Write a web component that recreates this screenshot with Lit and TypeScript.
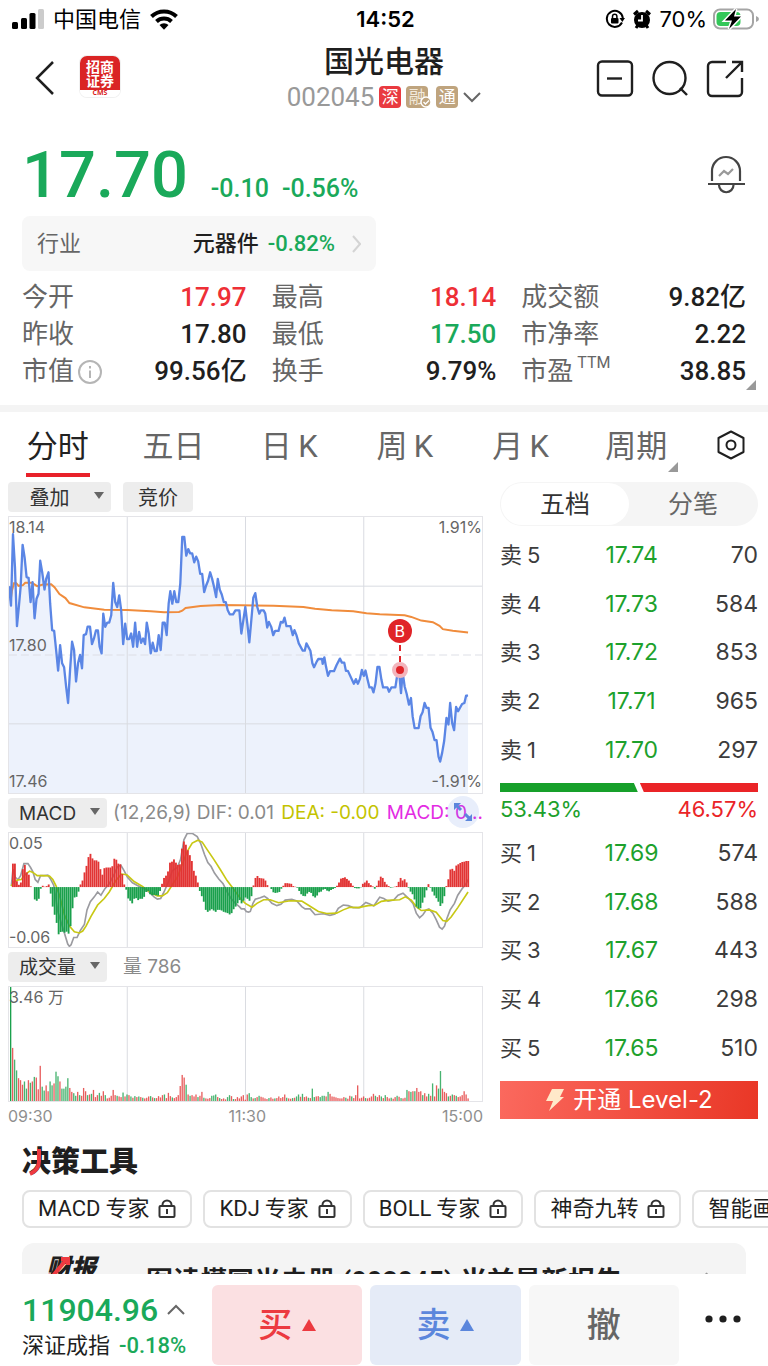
import { LitElement, html, svg, css } from "lit";
import { customElement, property, state } from "lit/decorators.js";
import { classMap } from "lit/directives/class-map.js";

type Point = [number, number];

const parse = (text: string, dx = 0): Point[] =>
  text
    .trim()
    .split(/\s+/)
    .map((pair) => {
      const [x, y] = pair.split(",").map(Number);
      return [x + dx, y] as Point;
    });

const toPath = (points: Point[]) => "M" + points.map(([x, y]) => `${x} ${y}`).join("L");

// The second half of every series is stored relative to the session midpoint.
const MID = 720;

const PRICE: Point[] = [
  ...parse(`23,497 29,556 35,340 41,440 47,618 53,556 58,500 64,372 70,410 76,470 82,472 88,545 94,485 100,594 106,535
  112,520 117,420 123,455 130,507 135,475 142,455 147,550 153,630 159,632 165,690 171,752 177,675 183,730 189,742
  195,800 201,850 207,750 213,665 219,690 225,785 231,730 237,705 243,745 248,645 255,642 260,619 267,619 273,672
  279,655 285,631 291,631 296,680 302,700 307,580 313,620 319,607 325,607 331,585 337,487 343,545 349,560 355,525
  361,570 367,672 373,610 379,657 385,657 391,640 397,680 403,607 409,680 415,635 421,668 427,655 433,672 438,607
  444,640 450,700 456,668 462,693 468,693 474,645 480,690 486,607 492,607 498,645 504,550 509,512 515,550 521,512
  527,545 533,545 539,490 545,348 551,348 557,405 563,385 569,398 575,398 581,425 587,408 593,422 599,460 605,460
  611,515 617,495 623,480 629,455 635,475 641,500 647,530 652,475 658,508 664,522 670,545 676,545 682,570 688,582
  698,582 705,570 717,570`),
  ...parse(
    `3,640 9,600 15,560 21,610 27,667 33,600 39,532 45,518 51,560 57,580 62,570 70,570 75,580 81,622 86,605 93,620
  99,645 105,632 115,632 122,605 128,607 133,592 139,618 151,618 158,645 163,630 169,645 176,670 188,692 194,692
  199,670 211,692 217,730 222,742 230,725 235,717 246,717 248,732 253,712 258,740 264,768 270,754 282,754 290,735
  300,716 306,728 313,728 318,753 324,753 342,792 348,778 354,792 360,778 366,750 372,768 377,752 383,778 389,803
  396,803 401,818 407,792 413,741 419,741 425,780 430,803 443,803 448,816 455,803 467,803 472,770 478,750 484,820
  489,758 495,800 501,822 508,855 514,835 519,890 525,926 537,926 543,890 549,878 555,850 561,865 567,865 573,925
  579,938 585,962 591,962 597,1012 602,1027 608,1000 614,965 621,895 627,915 632,850 638,910 644,932 650,862
  656,875 668,853 675,850 680,828 686,828`,
    MID
  ),
];

const AVERAGE: Point[] = [
  ...parse(`28,540 32,510 38,488 45,488 52,496 65,494 72,487 92,487 108,497 125,492 150,491 160,500 175,521 193,533
  205,548 250,561 310,568 380,569 450,573 490,576 535,575 545,571 555,563 600,557 660,554 720,555`),
  ...parse(
    `100,556 190,560 225,565 275,570 340,573 380,579 420,582 495,585 515,590 545,601 580,606 600,617 610,627
  640,632 686,637`,
    MID
  ),
];

const DIF: Point[] = [
  ...parse(`30,272 35,220 42,245 50,252 58,240 68,203 80,203 88,215 95,228 102,252 110,260 118,240 128,240 140,238
  148,250 158,270 170,350 185,400 200,450 205,457 210,452 218,430 228,430 238,408 250,390 258,345 268,320 280,305
  290,290 300,300 312,280 325,265 340,235 350,212 360,208 370,225 380,245 395,262 410,270 430,280 445,290 460,305
  470,312 480,310 490,290 505,255 515,225 530,215 540,190 550,130 560,110 575,110 590,120 600,140 612,175 622,200
  632,212 642,232 655,250 668,265 680,290 692,310 705,325 717,335`),
  ...parse(
    `3,342 12,342 18,350 25,352 30,350 38,325 45,312 60,308 72,303 82,310 95,325 110,332 122,328 135,315 155,313
  170,318 185,335 195,342 210,342 225,360 250,357 270,362 285,358 295,340 310,330 325,332 340,338 360,338 378,322
  390,327 402,333 412,318 420,306 432,310 445,318 462,315 475,300 490,294 505,308 520,325 530,355 540,369 550,360
  560,345 568,342 580,355 590,375 600,398 608,404 615,395 622,372 632,345 645,325 655,300 668,280 680,265 686,252`,
    MID
  ),
];

const DEA: Point[] = [
  ...parse(`30,272 38,258 50,253 60,252 70,238 85,226 95,230 108,240 125,240 145,241 155,252 165,272 175,300 190,360
  205,395 220,412 235,416 245,410 255,395 270,365 290,330 310,310 325,290 345,255 362,235 378,237 400,258 425,273
  450,292 470,302 485,302 500,292 515,268 530,245 545,205 560,165 575,140 592,131 605,137 620,160 640,190 660,222
  680,255 700,282 720,310`),
  ...parse(
    `15,325 35,337 50,325 70,314 90,314 115,323 150,317 185,318 210,334 235,350 260,356 290,355 310,345 330,337
  355,338 385,332 405,331 425,319 445,316 480,314 497,305 515,315 530,335 545,347 570,345 590,352 610,378 622,380
  635,367 655,338 686,290`,
    MID
  ),
];

const HISTOGRAM = [
  72, 72, 18, 7, 14, 55, 68, 45, 38, 2, 0, -38, -42, -36, -5, 4, 1, 3, 8, -20, -60, -85, -110, -145, -138, -137, -140,
  -137, -143, -120, -65, -32, -30, -14, 8, 20, 45, 65, 92, 102, 88, 82, 82, 78, 55, 38, 58, 60, 60, 60, 64, 87, 84, 72,
  70, 40, 8, -8, -35, -42, -50, -36, -34, -40, -36, -36, -30, -15, -12, -22, -25, -24, -25, -26, -12, 10, 28, 35, 48,
  75, 78, 85, 75, 68, 70, 118, 140, 130, 113, 98, 80, 50, 35, 14, -12, -28, -45, -70, -76, -72, -68, -72, -76, -70,
  -70, -72, -76, -78, -80, -84, -80, -68, -60, -50, -40, -50, -42, -32, -36, -42, -28, 5, 28, 34, 28, 27, 26, 20, 6, 0,
  -6, -16, -18, -17, -15, -5, 4, 12, 12, 11, 10, 3, 1, -2, -12, -22, -27, -28, -20, -15, -18, -28, -32, -26, -16, -14,
  -8, -6, -11, -13, -9, -6, -3, 4, 14, 26, 28, 30, 25, 20, 12, 4, -3, -4, -4, -1, 10, 14, 20, 12, 6, 2, -5, 4, 20, 32,
  28, 16, 8, 3, -2, -1, 1, 3, 16, 28, 20, 24, 14, -2, -14, -22, -38, -60, -66, -65, -48, -32, -10, 9, -2, -14, -26,
  -34, -45, -58, -50, -28, 3, 24, 54, 56, 50, 66, 70, 74, 77, 78, 80, 80,
];

// Positive bars are up minutes, negative bars are down minutes.
const VOLUME = [
  -350, 163, -127, -94, 70, 64, 50, -60, -38, 64, -56, 60, -74, 72, 36, 108, -44, -32, 48, 30, -60, -48, 54, -90, -76,
  60, -38, -38, -44, -70, 40, 28, -24, -16, 28, -18, 16, 40, 30, -18, 20, -22, 34, 12, 18, -25, 16, 30, -18, 8, 10, 16,
  34, 18, -16, 14, 12, -26, 14, -20, 18, -14, 10, -15, 12, -14, 12, -10, 8, 10, 14, -15, 11, -9, 9, 15, 11, 18, -20, 9,
  25, 15, -11, 9, 12, 18, 46, 80, 72, -50, 20, -16, 18, 14, 20, -12, 16, 28, -10, 8, 7, 9, -16, -17, -20, 12, -9,
  6, 8, 5, -12, -18, 15, -6, 6, 12, 8, 14, 18, 4, 20, -24, -12, 8, -9, 12, -16, 13, 11, 8, 6, -9, 11, 7, -8, 9, 14, 9,
  12, 20, -10, 8, 7, -9, 10, -14, -20, 13, -22, 12, 14, -10, 9, -38, -12, 14, 15, -12, -16, -16, 14, -28, 22, 14, 13,
  11, 9, 8, 8, 12, -10, 7, 16, -14, 9, 18, 48, 8, 10, 14, -9, 8, 10, 14, 22, -16, 12, 18, -14, 9, -18, 12, 8, -10,
  7, 12, -16, 13, -9, 8, 10, -34, 30, -28, 30, -30, 40, 28, 30, -18, 24, 14, -22, 16, -54, 14, 48, -38, -92, 38, 28,
  24, -14, 16, -20, 18, -16, 12, 14, 18, 30, 20, 8,
];

const UP = "#e23434";
const DOWN = "#1aa04c";

const gridLines = (left: number, top: number, width: number, height: number) => svg`
  ${[0.25, 0.5, 0.75].map(
    (f) => svg`<line x1=${left + width * f} x2=${left + width * f} y1=${top} y2=${top + height}></line>`
  )}`;

@customElement("trend-chart")
export class TrendChart extends LitElement {
  static styles = css`
    :host {
      display: block;
      position: relative;
      height: 278px;
      box-sizing: border-box;
      border: 1px solid #e4e4e8;
      font: 16px/20px Inter, "Noto Sans CJK SC", sans-serif;
      color: #666;
    }
    svg {
      display: block;
      width: 100%;
      height: 100%;
    }
    .grid {
      stroke: #d9dbe1;
      stroke-width: 3;
    }
    .dash {
      stroke: #dddfe6;
      stroke-dasharray: 24 12;
    }
    .fill {
      fill: #edf2fc;
    }
    .price {
      fill: none;
      stroke: #5b86e5;
      stroke-width: 7;
      stroke-linejoin: round;
    }
    .avg {
      fill: none;
      stroke: #f08c3c;
      stroke-width: 6;
    }
    .axis {
      position: absolute;
      inset: 0;
      display: grid;
      grid-template-columns: 1fr auto;
      grid-template-rows: 1fr 1fr;
    }
    .axis span:nth-child(even) {
      text-align: right;
    }
    .axis span:nth-child(n + 3) {
      align-self: end;
      padding-bottom: 2px;
    }
    .mid {
      position: absolute;
      left: 0;
      bottom: 50%;
    }
    .marker {
      position: absolute;
      left: 82.6%;
      top: 102px;
      width: 24px;
      margin-left: -12px;
      display: flex;
      flex-direction: column;
      align-items: center;
    }
    .letter {
      width: 24px;
      height: 24px;
      border-radius: 50%;
      background: #e02428;
      color: #fff;
      font-size: 16px;
      line-height: 24px;
      text-align: center;
    }
    .stem {
      width: 2px;
      height: 20px;
      background: repeating-linear-gradient(#fff 0 2px, #e02428 2px 8px, transparent 8px 11px);
    }
    .dot {
      width: 8px;
      height: 8px;
      margin-top: -1px;
      border: 4px solid #f3b5bc;
      border-radius: 50%;
      background: #e02428;
    }
  `;

  render() {
    const last = PRICE[PRICE.length - 1][0];
    const line = toPath(PRICE);
    return html`
      <svg viewBox="23 288 1425 834" preserveAspectRatio="none" aria-hidden="true">
        <path class="fill" d="${line}L${last} 1122L23 1122Z"></path>
        <g class="grid">
          ${gridLines(23, 288, 1425, 834)}
          <line x1="23" x2="1448" y1="497" y2="497"></line>
          <line class="dash" x1="23" x2="1448" y1="705" y2="705"></line>
          <line x1="23" x2="1448" y1="913" y2="913"></line>
        </g>
        <path class="avg" d=${toPath(AVERAGE)}></path>
        <path class="price" d=${line}></path>
      </svg>
      <div class="axis"><span>18.14</span><span>1.91%</span><span>17.46</span><span>-1.91%</span></div>
      <span class="mid">17.80</span>
      <div class="marker"><span class="letter">B</span><span class="stem"></span><span class="dot"></span></div>
    `;
  }
}

@customElement("bar-chart")
export class BarChart extends LitElement {
  @property() kind: "macd" | "volume" = "macd";

  static styles = css`
    :host {
      display: block;
      position: relative;
      height: 116px;
      box-sizing: border-box;
      border: 1px solid #e4e4e8;
      font: 16px/20px Inter, "Noto Sans CJK SC", sans-serif;
      color: #666;
    }
    svg {
      display: block;
      width: 100%;
      height: 100%;
    }
    .grid {
      stroke: #d9dbe1;
      stroke-width: 3;
    }
    .dif,
    .dea {
      fill: none;
      stroke: #9b9ba0;
      stroke-width: 5;
    }
    .dea {
      stroke: #c8c814;
    }
    .axis {
      position: absolute;
      inset: 0;
      display: flex;
      flex-direction: column;
      justify-content: space-between;
    }
  `;

  private macd() {
    return svg`
      <path class="dif" d=${toPath(DIF)}></path>
      <path class="dea" d=${toPath(DEA)}></path>
      ${HISTOGRAM.map(
        (v, i) => svg`<rect x=${32 + i * 5.99} y=${v > 0 ? 275 - v : 275} width="5.6"
          height=${Math.abs(v)} fill=${v > 0 ? UP : DOWN}></rect>`
      )}`;
  }

  private volume() {
    return svg`${VOLUME.map(
      (v, i) => svg`<rect x=${26 + i * 5.94} y=${459 - Math.abs(v)} width="4"
        height=${Math.abs(v)} fill=${v > 0 ? UP : DOWN} opacity=${i ? 0.8 : 1}></rect>`
    )}`;
  }

  render() {
    const macd = this.kind === "macd";
    return html`
      <svg viewBox="23 109 1425 350" preserveAspectRatio="none" aria-hidden="true">
        <g class="grid">${gridLines(23, 109, 1425, 350)}</g>
        ${macd ? this.macd() : this.volume()}
      </svg>
      <div class="axis">
        ${macd ? html`<span>0.05</span><span>-0.06</span>` : html`<span>3.46 万</span>`}
      </div>
    `;
  }
}

const ASKS = [
  ["卖", "5", "17.74", "70"],
  ["卖", "4", "17.73", "584"],
  ["卖", "3", "17.72", "853"],
  ["卖", "2", "17.71", "965"],
  ["卖", "1", "17.70", "297"],
];
const BIDS = [
  ["买", "1", "17.69", "574"],
  ["买", "2", "17.68", "588"],
  ["买", "3", "17.67", "443"],
  ["买", "4", "17.66", "298"],
  ["买", "5", "17.65", "510"],
];

@customElement("order-book")
export class OrderBook extends LitElement {
  @state() private view = "五档";

  static styles = css`
    :host {
      display: block;
      font: 23px/28px Inter, "Noto Sans CJK SC", sans-serif;
      color: #3c3c3c;
    }
    button {
      font: inherit;
      color: inherit;
      border: 0;
      padding: 0;
      background: none;
      cursor: pointer;
    }
    .segment {
      display: grid;
      grid-template-columns: 1fr 1fr;
      height: 44px;
      box-sizing: border-box;
      padding: 1px;
      border-radius: 22px;
      background: #f5f5f5;
      margin-bottom: 5px;
    }
    .segment button {
      border-radius: 21px;
      font-size: 25px;
      color: #666;
    }
    .segment .on {
      background: #fff;
      color: #333;
    }
    table {
      width: 100%;
      height: 243px;
      border-collapse: collapse;
      table-layout: fixed;
    }
    th,
    td {
      padding: 0;
      font-weight: 400;
      text-align: right;
    }
    th {
      width: 30%;
    }
    .level {
      display: flex;
      gap: 5px;
      font-size: 22px;
    }
    td:last-child {
      width: 28%;
    }
    .price {
      text-align: center;
      color: #1da12c;
    }
    .ratio {
      display: flex;
      height: 9px;
      margin-top: 9px;
    }
    .buy {
      background: #17a02a;
      clip-path: polygon(0 0, calc(100% - 4px) 0, 100% 100%, 0 100%);
    }
    .sell {
      flex: 1;
      margin-left: 2px;
      background: #ea2427;
      clip-path: polygon(0 0, 100% 0, 100% 100%, 4px 100%);
    }
    .shares {
      display: flex;
      justify-content: space-between;
      font-size: 22px;
      line-height: 34px;
      margin-bottom: 3px;
      color: #1da12c;
    }
    .shares .red {
      color: #ea2427;
    }
    .level2 {
      display: flex;
      align-items: center;
      justify-content: center;
      gap: 8px;
      width: 100%;
      height: 38px;
      margin-top: 9px;
      color: #fff;
      font-size: 24px;
      background: linear-gradient(100deg, #fb695e, #e93726);
    }
  `;

  private rows(rows: string[][]) {
    return html`<table>
      <tbody>
        ${rows.map(
          ([side, level, price, size]) => html`<tr>
            <th scope="row"><div class="level"><span>${side}</span><span>${level}</span></div></th>
            <td class="price">${price}</td>
            <td>${size}</td>
          </tr>`
        )}
      </tbody>
    </table>`;
  }

  render() {
    return html`
      <div class="segment">
        ${["五档", "分笔"].map(
          (v) => html`<button class=${classMap({ on: this.view === v })} @click=${() => (this.view = v)}>${v}</button>`
        )}
      </div>
      ${this.rows(ASKS)}
      <div class="ratio"><span class="buy" style="width:53.43%"></span><span class="sell"></span></div>
      <div class="shares"><span>53.43%</span><span class="red">46.57%</span></div>
      ${this.rows(BIDS)}
      <button class="level2">
        <svg width="20" height="24" viewBox="0 0 20 24" aria-hidden="true">
          <path d="M7 1h12l-4 8h4L4 23l4-10H1z" fill="#ffe9c9"></path>
        </svg>
        <span>开通 Level-2</span>
      </button>
    `;
  }
}

const lock = svg`<svg class="lock" width="18" height="20" viewBox="0 0 18 20" fill="none" stroke="#333"
  stroke-width="2" aria-hidden="true"><rect x="1.5" y="7" width="15" height="11" rx="1"></rect>
  <path d="M4.5 7V6a4.500 4.500 0 0 1 9 0v1M9 10v5"></path></svg>`;

const CELLS = [
  { label: "今开", value: "17.97", tone: "up" },
  { label: "最高", value: "18.14", tone: "up" },
  { label: "成交额", value: "9.82亿" },
  { label: "昨收", value: "17.80" },
  { label: "最低", value: "17.50", tone: "down" },
  { label: "市净率", value: "2.22" },
  { label: "市值", value: "99.56亿", info: true },
  { label: "换手", value: "9.79%" },
  { label: "市盈", value: "38.85", sup: "TTM", more: true },
];

const TABS = ["分时", "五日", "日\u2009K", "周\u2009K", "月\u2009K", "周期"];
const CHIPS = [["MACD", "专家"], ["KDJ", "专家"], ["BOLL", "专家"], ["神奇九转"], ["智能画线"]];

@customElement("app-root")
export class AppRoot extends LitElement {
  @state() private tab = "分时";

  static styles = css`
    :host {
      display: flex;
      flex-direction: column;
      height: 100vh;
      background: #fff;
      color: #1f1f1f;
      font-family: Roboto, "Noto Sans CJK SC", sans-serif;
      font-size: 22px;
      line-height: 28px;
    }
    button,
    select {
      font: inherit;
      color: inherit;
      border: 0;
      padding: 0;
      margin: 0;
      background: none;
      cursor: pointer;
    }
    h1,
    h2,
    dl,
    dt,
    dd {
      margin: 0;
      font-weight: inherit;
    }
    svg {
      flex: none;
    }
    .up {
      color: #ee2f36;
    }
    .down {
      color: #1aa95a;
    }
    .status {
      display: grid;
      grid-template-columns: 1fr auto 1fr;
      align-items: center;
      height: 38px;
      padding: 0 9px 0 12px;
      font-family: Inter, "Noto Sans CJK SC", sans-serif;
      color: #000;
      flex: none;
    }
    .status div {
      display: flex;
      align-items: center;
      gap: 9px;
    }
    .status .right {
      justify-content: flex-end;
      gap: 6px;
    }
    .clock {
      font-weight: 600;
    }
    main {
      flex: 1;
      min-height: 0;
      overflow: hidden auto;
      scrollbar-width: none;
    }
    .header {
      display: grid;
      grid-template-columns: 1fr auto 1fr;
      align-items: center;
      height: 82px;
      padding: 0 24px;
    }
    .header nav,
    .tools {
      display: flex;
      align-items: center;
      gap: 25px;
    }
    .header nav {
      align-self: start;
      padding: 18px 0 0 10px;
    }
    .header button {
      display: flex;
    }
    .tools {
      justify-content: flex-end;
      gap: 17px;
    }
    .logo {
      display: grid;
      grid-template-rows: 14px 14px 10px;
      width: 40px;
      height: 41px;
      box-sizing: border-box;
      padding-top: 3px;
      border-radius: 7px;
      box-shadow: 0 0 0 1px #f0f0f0;
      overflow: hidden;
      text-align: center;
      font: bold 14px/14px "Noto Sans CJK SC", sans-serif;
      color: #fff;
      background: linear-gradient(#da2424 82%, #fff 82%);
    }
    .logo small {
      font: bold 7px/12px "Open Sans", sans-serif;
      color: #da2424;
    }
    .name {
      text-align: center;
    }
    .name h1 {
      font-size: 30px;
      line-height: 36px;
      font-weight: 500;
    }
    .code {
      display: flex;
      align-items: center;
      justify-content: center;
      gap: 5px;
      font-size: 26px;
      line-height: 34px;
      color: #999;
    }
    .badge {
      position: relative;
      width: 22px;
      height: 22px;
      border-radius: 4px;
      background: #e93a40;
      color: #fff;
      font-size: 17px;
      line-height: 22px;
    }
    .gold {
      background: #bfa47e;
    }
    .soft {
      color: #f3eadc;
      margin-right: 3px;
    }
    .badge svg {
      position: absolute;
      right: -4px;
      bottom: 0;
    }
    .quote {
      padding: 15px 22px 0;
    }
    .headline {
      display: flex;
      align-items: baseline;
      gap: 13px;
      font-size: 25px;
      font-weight: 500;
    }
    .last {
      font-size: 65px;
      line-height: 80px;
      margin-right: 10px;
    }
    .bell {
      margin-left: auto;
      align-self: center;
      display: flex;
    }
    .industry {
      display: flex;
      align-items: center;
      width: 354px;
      box-sizing: border-box;
      height: 55px;
      padding: 0 15px;
      border-radius: 8px;
      background: #f7f7f7;
      text-decoration: none;
      color: #666;
      margin: 1px 0 8px;
    }
    .industry b {
      margin-left: auto;
      margin-right: 9px;
      font-weight: 500;
      color: #1f1f1f;
    }
    .industry .down {
      font-weight: 500;
      margin-right: 17px;
    }
    .cells {
      display: grid;
      grid-template-columns: repeat(3, 1fr);
      column-gap: 25px;
      font-size: 26px;
      line-height: 37px;
    }
    .cell {
      position: relative;
      display: flex;
      justify-content: space-between;
    }
    .cell dt {
      display: flex;
      align-items: center;
      gap: 4px;
      color: #666;
    }
    .cell dd {
      font-weight: 500;
    }
    .cell sup {
      align-self: flex-start;
      font-size: 16px;
      line-height: 20px;
    }
    .corner {
      position: absolute;
      right: -10px;
      bottom: 0;
    }
    .rule {
      height: 7px;
      margin-top: 15px;
      background: #f4f4f4;
    }
    .tabs {
      display: grid;
      grid-template-columns: repeat(6, 116fr) 74fr;
      height: 66px;
    }
    .tabs button {
      position: relative;
      padding-top: 4px;
      font-size: 31px;
      color: #666;
    }
    .tabs .on {
      color: #222;
    }
    .tabs .on::after {
      content: "";
      position: absolute;
      left: 50%;
      bottom: 1px;
      width: 64px;
      height: 4px;
      margin-left: -32px;
      background: #e8212a;
    }
    .tabs .corner {
      right: 16px;
      bottom: 6px;
    }
    .tabs .gear {
      display: flex;
      align-items: center;
      justify-content: center;
      padding: 0;
    }
    .market {
      display: grid;
      grid-template-columns: 475fr 258fr;
      gap: 17px;
      padding: 4px 10px 0 8px;
    }
    .charts {
      display: flex;
      flex-direction: column;
      gap: 4px;
      min-width: 0;
    }
    .bar {
      position: relative;
      display: flex;
      align-items: center;
      gap: 6px;
      height: 30px;
      font: 19px/30px Inter, "Noto Sans CJK SC", sans-serif;
      color: #8a8a8a;
      white-space: nowrap;
    }
    .first {
      gap: 12px;
      font-size: 20px;
    }
    .volume {
      gap: 16px;
    }
    .pill {
      position: relative;
      display: flex;
      flex: none;
      border-radius: 4px;
      background: #ededed;
      color: #333;
    }
    .pill select {
      appearance: none;
      width: 99px;
      height: 30px;
      padding: 1px 20px 0 0;
      text-align: center;
      text-align-last: center;
    }
    .first .pill select {
      width: 103px;
    }
    .pill svg {
      position: absolute;
      right: 7px;
      top: 10px;
      pointer-events: none;
    }
    .plain {
      height: 30px;
      padding: 1px 15px 0;
      border-radius: 4px;
      background: #ededed;
      color: #333;
    }
    .values {
      overflow: hidden;
      text-overflow: ellipsis;
      color: #e32be3;
    }
    .values span {
      color: #8a8a8a;
      margin-right: 2px;
    }
    .values .dea {
      color: #c3c300;
    }
    .expand {
      position: absolute;
      right: 4px;
      top: -2px;
      display: flex;
      width: 32px;
      height: 32px;
      align-items: center;
      justify-content: center;
      border-radius: 50%;
      background: rgb(91 134 229 / 14%);
    }
    .times {
      display: flex;
      justify-content: space-between;
      margin-top: -4px;
      font: 16px/28px Inter, sans-serif;
      color: #8f8f8f;
    }
    .decision {
      padding: 12px 0 0 22px;
    }
    .decision h2 {
      position: relative;
      font-size: 29px;
      line-height: 40px;
      font-weight: 900;
    }
    .decision h2 svg {
      position: absolute;
      left: 0;
      top: 5px;
    }
    .chips {
      display: flex;
      gap: 11px;
      margin: 8px 0 15px;
      overflow: hidden;
    }
    .chips button {
      flex: none;
      display: flex;
      align-items: center;
      gap: 5px;
      height: 38px;
      padding: 0 14px;
      border: 2px solid #e2e2e2;
      border-radius: 8px;
    }
    .chips .lock {
      margin-left: 4px;
    }
    .report {
      display: flex;
      align-items: center;
      padding: 13px 32px 13px 24px;
      margin-right: 22px;
      border-radius: 12px;
      background: #f4f4f4;
      color: inherit;
      text-decoration: none;
      font-size: 27px;
      line-height: 52px;
      font-weight: 700;
    }
    .report i {
      position: relative;
      align-self: flex-start;
      width: 100px;
      font-size: 25px;
      line-height: 26px;
      font-weight: 900;
    }
    .report i svg {
      position: absolute;
      left: 0;
      top: 0;
    }
    .report .go {
      margin-left: auto;
    }
    footer {
      display: grid;
      grid-template-columns: 182px 1fr 1fr 1fr 81px;
      gap: 8px;
      flex: none;
      padding: 11px 0 1px 22px;
      background: #fff;
    }
    .index {
      display: flex;
      flex-direction: column;
      text-align: left;
    }
    .index strong {
      display: flex;
      align-items: center;
      gap: 9px;
      font-size: 32px;
      line-height: 50px;
      font-weight: 500;
    }
    .index span {
      display: flex;
      gap: 9px;
      line-height: 22px;
    }
    .index em {
      font-style: normal;
      font-weight: 500;
    }
    .trade {
      display: flex;
      align-items: center;
      justify-content: center;
      gap: 10px;
      height: 80px;
      border-radius: 6px;
      font-size: 34px;
      font-weight: 500;
    }
    .buy {
      background: #fbe0e2;
      color: #ec3a40;
    }
    .sell {
      background: #e5ebf7;
      color: #5b86dc;
    }
    .cancel {
      background: #f7f7f7;
      color: #666;
    }
    .dots {
      display: flex;
      justify-content: center;
      padding-top: 30px;
      padding-right: 8px;
    }
  `;

  private pill(label: string, options: string[]) {
    return html`<label class="pill">
      <select aria-label=${label}>
        ${options.map((o) => html`<option>${o}</option>`)}
      </select>
      <svg width="10" height="8" viewBox="0 0 10 8" aria-hidden="true"><path d="M0 0h10L5 7z" fill="#666"></path></svg>
    </label>`;
  }

  private corner() {
    return svg`<svg class="corner" width="10" height="10" viewBox="0 0 10 10" aria-hidden="true">
      <path d="M10 0v10H0z" fill="#999"></path></svg>`;
  }

  private statusBar() {
    return html`<div class="status">
      <div>
        <svg width="32" height="20" viewBox="0 0 32 20" aria-hidden="true">
          <rect x="0" y="13" width="6" height="7" rx="1.500"></rect>
          <rect x="9" y="9" width="6" height="11" rx="1.500"></rect>
          <rect x="17.500" y="4" width="6" height="16" rx="1.500"></rect>
          <rect x="26" y="0" width="6" height="20" rx="1.500" fill="#ccc"></rect>
        </svg>
        <span>中国电信</span>
        <svg width="28" height="21" viewBox="0 0 28 21" fill="none" stroke="#000" stroke-width="4" aria-hidden="true">
          <path d="M1.500 7.500a18 18 0 0 1 25 0M6.500 12.500a11 11 0 0 1 15 0"></path>
          <path d="M9.500 16a6.500 6.500 0 0 1 9 0L14 20.800z" fill="#000" stroke="none"></path>
        </svg>
      </div>
      <span class="clock">14:52</span>
      <div class="right">
        <svg width="20" height="20" viewBox="0 0 20 20" aria-hidden="true">
          <path d="M17 13.500A8 8 0 1 1 17.800 9" fill="none" stroke="#000" stroke-width="2"></path>
          <path d="M14.500 9H20l-2.700 4z"></path>
          <rect x="6" y="9" width="7.500" height="5.500" rx="1"></rect>
          <path d="M7.500 9V7.500a2.200 2.200 0 0 1 4.400 0V9" fill="none" stroke="#000" stroke-width="1.500"></path>
        </svg>
        <svg width="22" height="20" viewBox="0 0 22 20" aria-hidden="true">
          <circle cx="11" cy="11" r="8"></circle>
          <path d="M3 5.500 7 2M19 5.500 15 2M5 19l2-3M17 19l-2-3" stroke="#000" stroke-width="3"></path>
          <path d="M11 6v5.500H7" fill="none" stroke="#fff" stroke-width="1.800"></path>
        </svg>
        <span>70%</span>
        <svg width="46" height="22" viewBox="0 0 46 22" aria-hidden="true">
          <rect x="1" y="1.500" width="39" height="19" rx="6" fill="none" stroke="#a5a5a5" stroke-width="2"></rect>
          <path d="M43 8v6q3-1 3-3t-3-3" fill="#a5a5a5"></path>
          <rect x="3.500" y="4" width="24" height="14" rx="4" fill="#34c759"></rect>
          <path d="M23 1 12 12.500h7L16 21l12-12.500h-7z" stroke="#fff" stroke-width="3" paint-order="stroke"></path>
        </svg>
      </div>
    </div>`;
  }

  private header() {
    return html`<header class="header">
      <nav>
        <button aria-label="返回">
          <svg width="21" height="36" viewBox="0 0 21 36" fill="none" stroke="#1f1f1f" stroke-width="2.500">
            <path d="M19 3 3 19l16 16"></path>
          </svg>
        </button>
        <div class="logo"><span>招商</span><span>证券</span><small>CMS</small></div>
      </nav>
      <div class="name">
        <h1>国光电器</h1>
        <div class="code">
          002045<span class="badge">深</span
          ><span class="badge gold soft"
            >融<svg width="12" height="12" viewBox="0 0 12 12" fill="#bfa47e" stroke="#fff" stroke-width="1.400">
              <circle cx="6" cy="6" r="5"></circle>
              <path d="m3.500 6 2 2 3.500-3.500" fill="none"></path></svg></span
          ><span class="badge gold">通</span>
          <svg width="18" height="12" viewBox="0 0 18 12" fill="none" stroke="#666" stroke-width="2">
            <path d="m1 2 8 8 8-8"></path>
          </svg>
        </div>
      </div>
      <div class="tools">
        <button aria-label="移除自选">
          <svg width="38" height="38" viewBox="0 0 38 38" fill="none" stroke="#1f1f1f" stroke-width="2.400">
            <rect x="2" y="1.500" width="34" height="34" rx="4"></rect>
            <path d="M11 18.500h15"></path>
          </svg>
        </button>
        <button aria-label="搜索">
          <svg width="38" height="38" viewBox="0 0 38 38" fill="none" stroke="#1f1f1f" stroke-width="2.400">
            <circle cx="18.500" cy="18" r="16"></circle>
            <path d="m29 28 7 7"></path>
          </svg>
        </button>
        <button aria-label="分享">
          <svg width="38" height="38" viewBox="0 0 38 38" fill="none" stroke="#1f1f1f" stroke-width="2.400">
            <path d="M20 2H6a4 4 0 0 0-4 4v26a4 4 0 0 0 4 4h26a4 4 0 0 0 4-4V18M26 2h10v10M36 2 20 18"></path>
          </svg>
        </button>
      </div>
    </header>`;
  }

  private quote() {
    return html`<section class="quote">
      <div class="headline down">
        <span class="last">17.70</span><span>-0.10</span><span>-0.56%</span>
        <button class="bell" aria-label="预警">
          <svg width="38" height="40" viewBox="0 0 38 40" fill="none" stroke="#444" stroke-width="2.200">
            <path d="M4 26V16a14 14 0 0 1 28 0v10M0 29h37M11 30a7.200 7.200 0 0 0 14.500 0"></path>
            <path d="m11 21 5-5 4 3 5-5" stroke="#999"></path>
          </svg>
        </button>
      </div>
      <a class="industry" href="#industry">
        <span>行业</span><b>元器件</b><span class="down">-0.82%</span>
        <svg width="9" height="20" viewBox="0 0 9 20" fill="none" stroke="#d4d4d4" stroke-width="2">
          <path d="m1 2 7 8-7 8"></path>
        </svg>
      </a>
      <dl class="cells">
        ${CELLS.map(
          (c) => html`<div class="cell">
            <dt>
              ${c.label}
              ${c.info
                ? html`<svg width="24" height="24" viewBox="0 0 24 24" fill="none" stroke="#b5b5b5" stroke-width="2">
                    <circle cx="12" cy="12" r="11"></circle>
                    <path d="M12 10.500V18M12 6v2.500"></path>
                  </svg>`
                : ""}
              ${c.sup ? html`<sup>${c.sup}</sup>` : ""}
            </dt>
            <dd class=${c.tone ?? ""}>${c.value}</dd>
            ${c.more ? this.corner() : ""}
          </div>`
        )}
      </dl>
    </section>`;
  }

  private market() {
    return html`<section class="market">
      <div class="charts">
        <div class="bar first">${this.pill("叠加", ["叠加"])}<button class="plain">竞价</button></div>
        <trend-chart></trend-chart>
        <div class="bar">
          ${this.pill("指标", ["MACD"])}
          <div class="values"
            ><span>(12,26,9) DIF: 0.01</span> <span class="dea">DEA: -0.00</span> MACD: 0.02</div
          >
          <button class="expand" aria-label="放大">
            <svg width="20" height="20" viewBox="0 0 20 20" fill="#5b86dc" stroke="#5b86dc">
              <path d="M1 1h7L1 8zM19 19h-7l7-7z" stroke="none"></path>
              <path d="m3 3 5 5M17 17l-5-5" stroke-width="3"></path>
            </svg>
          </button>
        </div>
        <bar-chart kind="macd"></bar-chart>
        <div class="bar volume">${this.pill("副图", ["成交量"])}<span>量 786</span></div>
        <bar-chart kind="volume"></bar-chart>
        <div class="times"><span>09:30</span><span>11:30</span><span>15:00</span></div>
      </div>
      <order-book></order-book>
    </section>`;
  }

  private decision() {
    return html`<section class="decision">
      <h2>
        决策工具<svg width="30" height="30" viewBox="0 0 30 30" fill="none" stroke="#ee3a40" stroke-width="4">
          <path d="M17 2v12q0 9-9 13"></path>
        </svg>
      </h2>
      <div class="chips">
        ${CHIPS.map((parts) => html`<button>${parts.map((p) => html`<span>${p}</span>`)}${lock}</button>`)}
      </div>
      <a class="report" href="#report">
        <i
          >财报<svg width="28" height="26" viewBox="0 0 28 26" fill="none" stroke="#ee3a40" stroke-width="4">
            <path d="m2 19 4 2L20 4M15 3h7v6"></path></svg
        ></i>
        <span>图读懂国光电器 (002045) 当前最新报告</span>
        <svg class="go" width="9" height="20" viewBox="0 0 9 20" fill="none" stroke="#999" stroke-width="2">
          <path d="m1 1 7 9-7 9"></path>
        </svg>
      </a>
    </section>`;
  }

  render() {
    return html`
      ${this.statusBar()}
      <main>
        ${this.header()} ${this.quote()}
        <div class="rule"></div>
        <nav class="tabs">
          ${TABS.map(
            (t) => html`<button class=${classMap({ on: t === this.tab })} @click=${() => (this.tab = t)}>
              ${t}${t === "周期" ? this.corner() : ""}
            </button>`
          )}
          <button class="gear" aria-label="设置">
            <svg width="30" height="32" viewBox="0 0 30 32" fill="none" stroke="#1f1f1f" stroke-width="2">
              <path d="M15 2.500 27.500 9v14L15 29.500 2.500 23V9z" stroke-linejoin="round"></path>
              <circle cx="15" cy="16" r="4.500"></circle>
            </svg>
          </button>
        </nav>
        ${this.market()} ${this.decision()}
      </main>
      <footer>
        <button class="index">
          <strong class="down"
            >11904.96<svg width="18" height="12" viewBox="0 0 18 12" fill="none" stroke="#666" stroke-width="2">
              <path d="m1 10 8-8 8 8"></path></svg
          ></strong>
          <span>深证成指<em class="down">-0.18%</em></span>
        </button>
        ${[
          ["buy", "买"],
          ["sell", "卖"],
          ["cancel", "撤"],
        ].map(
          ([kind, label]) => html`<button class="trade ${kind}">
            ${label}${kind === "cancel"
              ? ""
              : html`<svg width="14" height="12" viewBox="0 0 14 12"><path d="M7 0l7 12H0z" fill="currentColor"></path></svg>`}
          </button>`
        )}
        <button class="dots" aria-label="更多">
          <svg width="36" height="8" viewBox="0 0 36 8" fill="#1f1f1f">
            <circle cx="4" cy="4" r="3.600"></circle>
            <circle cx="18" cy="4" r="3.600"></circle>
            <circle cx="32" cy="4" r="3.600"></circle>
          </svg>
        </button>
      </footer>
    `;
  }
}
